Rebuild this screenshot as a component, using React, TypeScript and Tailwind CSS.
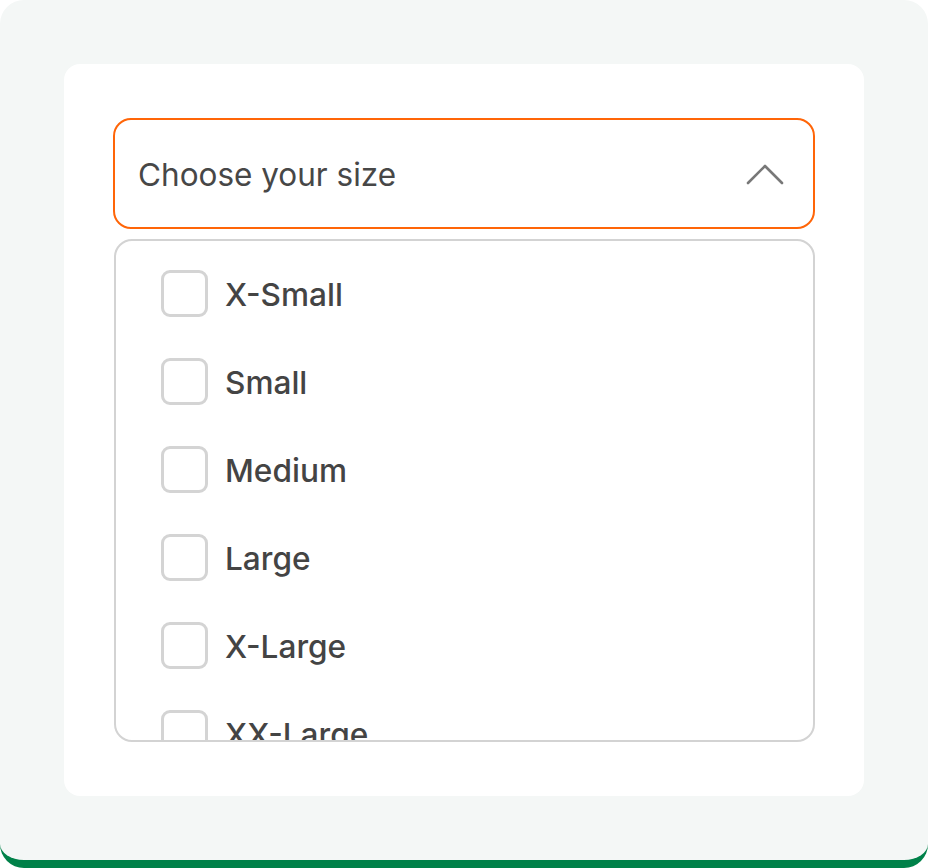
import React from "react";

const sizes = ["X-Small", "Small", "Medium", "Large", "X-Large", "XX-Large", "XXX-Large"];

export default function App() {
  return (
    <div
      className="w-[928px] h-[868px] bg-[#f4f7f6] rounded-[24px] border-b-[8px] border-[#008149] pt-[64px] px-[64px] box-border"
      style={{ fontFamily: "Inter, 'Noto Sans', sans-serif" }}
    >
      <div className="w-[800px] h-[732px] bg-white rounded-[16px] pt-[54px] pl-[49px] pr-[49px] box-border flex flex-col">
        <div className="h-[111px] w-[702px] rounded-[18px] border-2 border-[#ff6508] flex items-center justify-between pl-[23px] pr-[28px] box-border">
          <span className="text-[31.5px] text-[#474747] font-normal pt-[3px]">Choose your size</span>
          <svg width="40" height="24" viewBox="0 0 40 24" fill="none">
            <path d="M3 21 L20 4 L37 21" stroke="#787878" strokeWidth="2.6" strokeLinecap="round" strokeLinejoin="round" />
          </svg>
        </div>
        <div className="mt-[10px] ml-[1px] w-[701px] h-[503px] rounded-[18px] border-2 border-[#d3d3d3] overflow-hidden box-border pt-[29px] pl-[45px]">
          <div className="flex flex-col gap-[41px]">
            {sizes.map((s) => (
              <div key={s} className="flex items-center gap-[17px] h-[47px]">
                <div className="w-[47px] h-[47px] rounded-[9px] border-[3px] border-[#d4d4d4] box-border shrink-0" />
                <span className="text-[31.6px] font-medium text-[#444444] pt-[3px]">{s}</span>
              </div>
            ))}
          </div>
        </div>
      </div>
    </div>
  );
}
